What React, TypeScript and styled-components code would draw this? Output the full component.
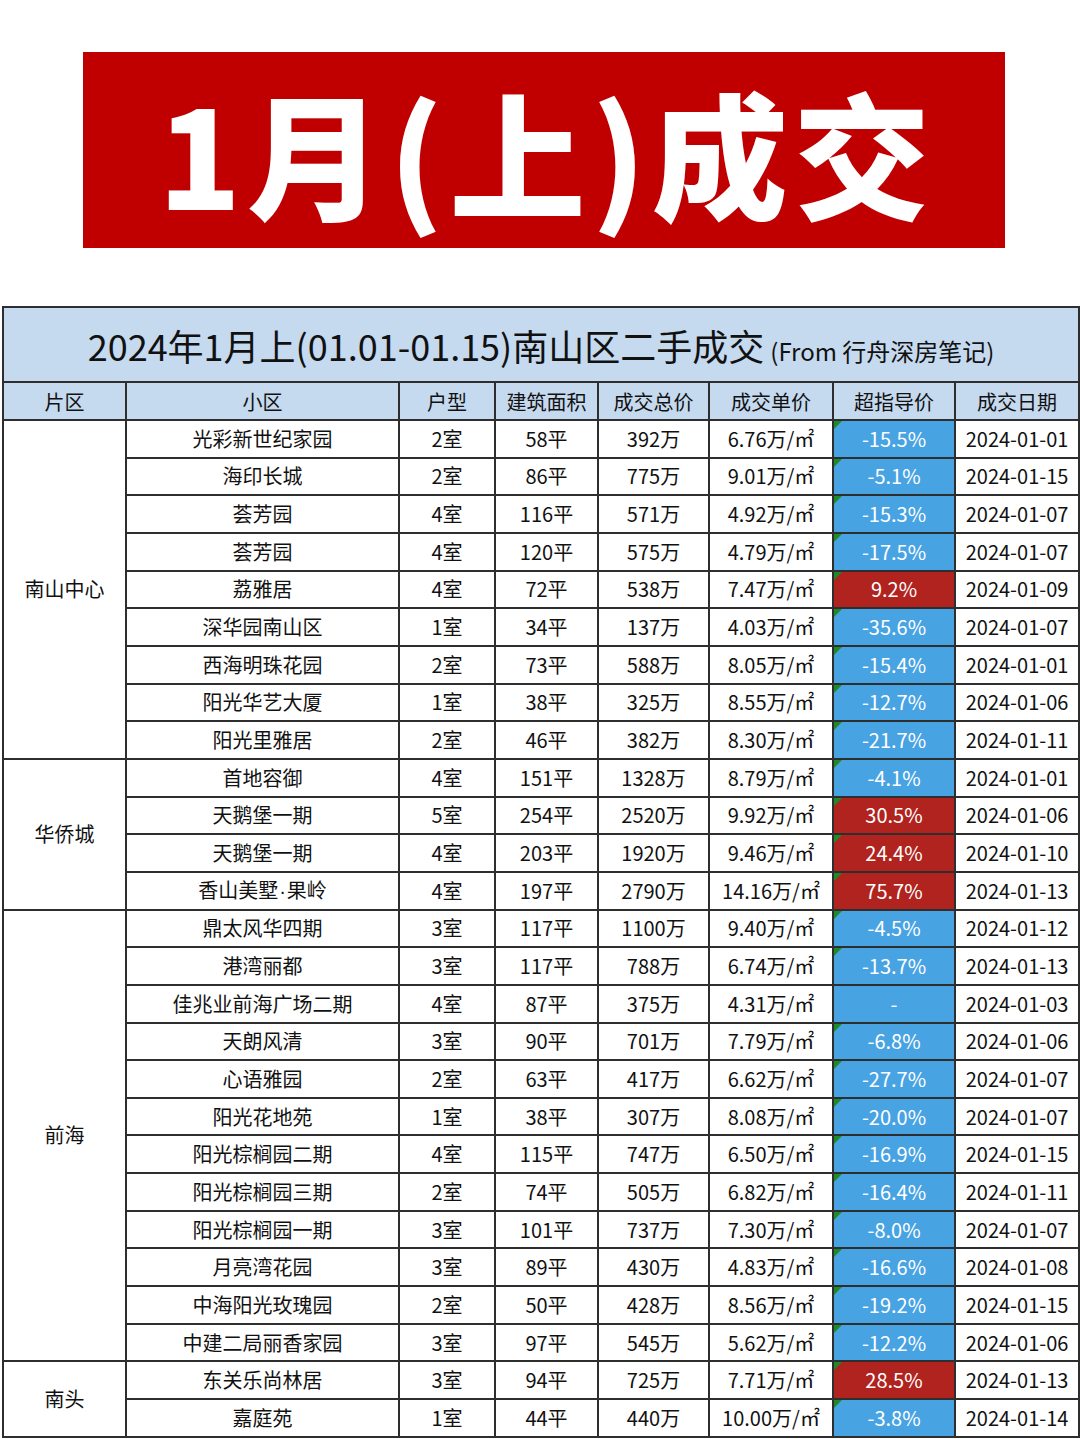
import React from "react";
import styled, { createGlobalStyle } from "styled-components";

const Global = createGlobalStyle`
  html, body { margin: 0; padding: 0; background: #ffffff; }
  body { font-family: "Noto Sans CJK SC", "Noto Sans", sans-serif; color: #111; }
`;

const Page = styled.div`
  width: 1080px;
  height: 1439px;
  display: flex;
  flex-direction: column;
  background: #fff;
  overflow: hidden;
`;

const Banner = styled.div`
  margin: 52px 0 0 83px;
  width: 922px;
  height: 196px;
  background: #c00000;
  display: flex;
  align-items: center;
  justify-content: center;
`;

const BannerText = styled.h1`
  margin: 0;
  padding-left: 6px;
  color: #fff;
  font-family: "Noto Sans CJK SC", sans-serif;
  font-weight: 900;
  font-size: 136px;
  line-height: 1;
  letter-spacing: 6px;
  transform: translateY(1px);
`;

const Table = styled.table`
  margin: 58px 0 0 2px;
  width: 1076px;
  border-collapse: collapse;
  table-layout: fixed;
  border: 2px solid #2e2e2e;
`;

const TitleCell = styled.th`
  height: 73px;
  background: #c5d9ef;
  border: 2px solid #2e2e2e;
  font-weight: 400;
  font-size: 36px;
  color: #111;
  text-align: center;
  padding: 0;
  white-space: nowrap;
`;

const TitleSmall = styled.span`
  font-size: 24px;
  margin-left: 6px;
`;

const HeadCell = styled.th`
  height: 36px;
  background: #c5d9ef;
  border: 2px solid #2e2e2e;
  font-weight: 400;
  font-size: 20px;
  color: #111;
  text-align: center;
  padding: 0;
  white-space: nowrap;
`;

const Row = styled.tr`
  height: 37.67px;
`;

const Cell = styled.td`
  border: 2px solid #2e2e2e;
  font-size: 20px;
  text-align: center;
  padding: 0;
  white-space: nowrap;
  color: #111;
  line-height: 1;
`;

const Dot = styled.span`
  font-family: "Liberation Sans", sans-serif;
  margin: 0 1px;
`;

const PctCell = styled.td<{ $up: boolean; $mark: boolean }>`
  position: relative;
  border: 2px solid #2e2e2e;
  font-size: 20px;
  text-align: center;
  padding: 0;
  white-space: nowrap;
  line-height: 1;
  color: #fff;
  background: ${(p) => (p.$up ? "#b0231e" : "#48a3e3")};
  &::before {
    content: "";
    display: ${(p) => (p.$mark ? "block" : "none")};
    position: absolute;
    left: 0;
    top: 0;
    width: 0;
    height: 0;
    border-top: 8px solid #1f8a2a;
    border-right: 8px solid transparent;
  }
`;

type Deal = {
  area?: string;
  span?: number;
  name: string;
  room: string;
  size: string;
  total: string;
  unit: string;
  pct: string;
  date: string;
};

const rows: Deal[] = [
  { area: "南山中心", span: 9, name: "光彩新世纪家园", room: "2室", size: "58平", total: "392万", unit: "6.76万/㎡", pct: "-15.5%", date: "2024-01-01" },
  { name: "海印长城", room: "2室", size: "86平", total: "775万", unit: "9.01万/㎡", pct: "-5.1%", date: "2024-01-15" },
  { name: "荟芳园", room: "4室", size: "116平", total: "571万", unit: "4.92万/㎡", pct: "-15.3%", date: "2024-01-07" },
  { name: "荟芳园", room: "4室", size: "120平", total: "575万", unit: "4.79万/㎡", pct: "-17.5%", date: "2024-01-07" },
  { name: "荔雅居", room: "4室", size: "72平", total: "538万", unit: "7.47万/㎡", pct: "9.2%", date: "2024-01-09" },
  { name: "深华园南山区", room: "1室", size: "34平", total: "137万", unit: "4.03万/㎡", pct: "-35.6%", date: "2024-01-07" },
  { name: "西海明珠花园", room: "2室", size: "73平", total: "588万", unit: "8.05万/㎡", pct: "-15.4%", date: "2024-01-01" },
  { name: "阳光华艺大厦", room: "1室", size: "38平", total: "325万", unit: "8.55万/㎡", pct: "-12.7%", date: "2024-01-06" },
  { name: "阳光里雅居", room: "2室", size: "46平", total: "382万", unit: "8.30万/㎡", pct: "-21.7%", date: "2024-01-11" },
  { area: "华侨城", span: 4, name: "首地容御", room: "4室", size: "151平", total: "1328万", unit: "8.79万/㎡", pct: "-4.1%", date: "2024-01-01" },
  { name: "天鹅堡一期", room: "5室", size: "254平", total: "2520万", unit: "9.92万/㎡", pct: "30.5%", date: "2024-01-06" },
  { name: "天鹅堡一期", room: "4室", size: "203平", total: "1920万", unit: "9.46万/㎡", pct: "24.4%", date: "2024-01-10" },
  { name: "香山美墅·果岭", room: "4室", size: "197平", total: "2790万", unit: "14.16万/㎡", pct: "75.7%", date: "2024-01-13" },
  { area: "前海", span: 12, name: "鼎太风华四期", room: "3室", size: "117平", total: "1100万", unit: "9.40万/㎡", pct: "-4.5%", date: "2024-01-12" },
  { name: "港湾丽都", room: "3室", size: "117平", total: "788万", unit: "6.74万/㎡", pct: "-13.7%", date: "2024-01-13" },
  { name: "佳兆业前海广场二期", room: "4室", size: "87平", total: "375万", unit: "4.31万/㎡", pct: "-", date: "2024-01-03" },
  { name: "天朗风清", room: "3室", size: "90平", total: "701万", unit: "7.79万/㎡", pct: "-6.8%", date: "2024-01-06" },
  { name: "心语雅园", room: "2室", size: "63平", total: "417万", unit: "6.62万/㎡", pct: "-27.7%", date: "2024-01-07" },
  { name: "阳光花地苑", room: "1室", size: "38平", total: "307万", unit: "8.08万/㎡", pct: "-20.0%", date: "2024-01-07" },
  { name: "阳光棕榈园二期", room: "4室", size: "115平", total: "747万", unit: "6.50万/㎡", pct: "-16.9%", date: "2024-01-15" },
  { name: "阳光棕榈园三期", room: "2室", size: "74平", total: "505万", unit: "6.82万/㎡", pct: "-16.4%", date: "2024-01-11" },
  { name: "阳光棕榈园一期", room: "3室", size: "101平", total: "737万", unit: "7.30万/㎡", pct: "-8.0%", date: "2024-01-07" },
  { name: "月亮湾花园", room: "3室", size: "89平", total: "430万", unit: "4.83万/㎡", pct: "-16.6%", date: "2024-01-08" },
  { name: "中海阳光玫瑰园", room: "2室", size: "50平", total: "428万", unit: "8.56万/㎡", pct: "-19.2%", date: "2024-01-15" },
  { name: "中建二局丽香家园", room: "3室", size: "97平", total: "545万", unit: "5.62万/㎡", pct: "-12.2%", date: "2024-01-06" },
  { area: "南头", span: 2, name: "东关乐尚林居", room: "3室", size: "94平", total: "725万", unit: "7.71万/㎡", pct: "28.5%", date: "2024-01-13" },
  { name: "嘉庭苑", room: "1室", size: "44平", total: "440万", unit: "10.00万/㎡", pct: "-3.8%", date: "2024-01-14" },
];

const widths = [123, 273, 96, 103, 111, 124, 122, 124];
const heads = ["片区", "小区", "户型", "建筑面积", "成交总价", "成交单价", "超指导价", "成交日期"];

function renderName(name: string) {
  const parts = name.split("·");
  if (parts.length === 1) return name;
  return (
    <>
      {parts[0]}
      <Dot>·</Dot>
      {parts[1]}
    </>
  );
}

export default function App() {
  return (
    <Page>
      <Global />
      <Banner>
        <BannerText>1月(上)成交</BannerText>
      </Banner>
      <Table>
        <colgroup>
          {widths.map((w, i) => (
            <col key={i} style={{ width: w }} />
          ))}
        </colgroup>
        <thead>
          <tr>
            <TitleCell colSpan={8}>
              2024年1月上(01.01-01.15)南山区二手成交
              <TitleSmall>(From 行舟深房笔记)</TitleSmall>
            </TitleCell>
          </tr>
          <tr>
            {heads.map((h) => (
              <HeadCell key={h}>{h}</HeadCell>
            ))}
          </tr>
        </thead>
        <tbody>
          {rows.map((r, i) => (
            <Row key={i}>
              {r.area && <Cell rowSpan={r.span}>{r.area}</Cell>}
              <Cell>{renderName(r.name)}</Cell>
              <Cell>{r.room}</Cell>
              <Cell>{r.size}</Cell>
              <Cell>{r.total}</Cell>
              <Cell>{r.unit}</Cell>
              <PctCell $up={!r.pct.startsWith("-")} $mark={r.pct !== "-"}>
                {r.pct}
              </PctCell>
              <Cell>{r.date}</Cell>
            </Row>
          ))}
        </tbody>
      </Table>
    </Page>
  );
}
